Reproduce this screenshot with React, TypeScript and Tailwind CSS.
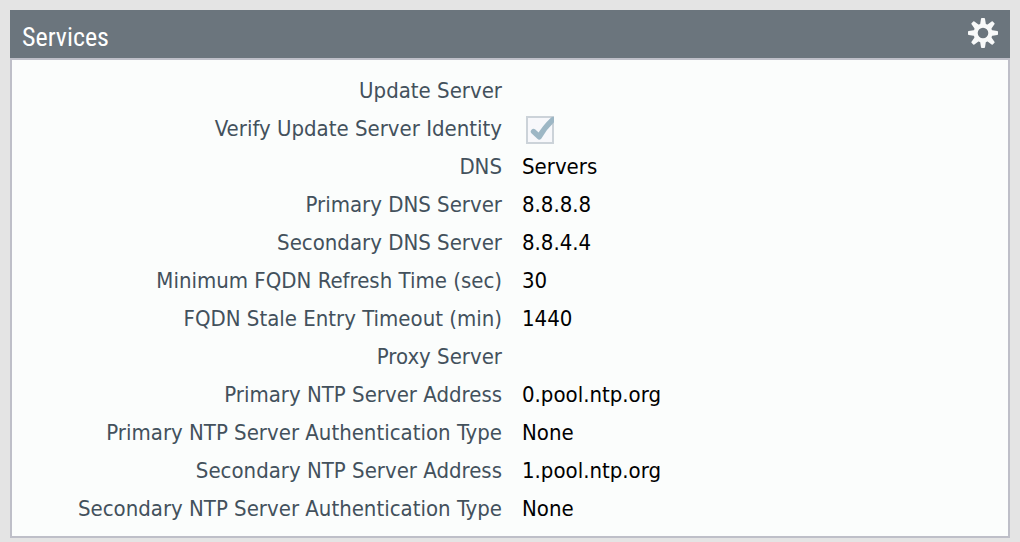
type Row = { label: string; value?: string; checked?: boolean };

const rows: Row[] = [
  { label: "Update Server" },
  { label: "Verify Update Server Identity", checked: true },
  { label: "DNS", value: "Servers" },
  { label: "Primary DNS Server", value: "8.8.8.8" },
  { label: "Secondary DNS Server", value: "8.8.4.4" },
  { label: "Minimum FQDN Refresh Time (sec)", value: "30" },
  { label: "FQDN Stale Entry Timeout (min)", value: "1440" },
  { label: "Proxy Server" },
  { label: "Primary NTP Server Address", value: "0.pool.ntp.org" },
  { label: "Primary NTP Server Authentication Type", value: "None" },
  { label: "Secondary NTP Server Address", value: "1.pool.ntp.org" },
  { label: "Secondary NTP Server Authentication Type", value: "None" },
];

const teeth = [0, 45, 90, 135, 180, 225, 270, 315];

function Gear() {
  return (
    <svg viewBox="0 0 30 30" className="size-[30px]" aria-hidden="true">
      <circle cx="15" cy="15" r="7.4" fill="none" stroke="#f8f9f9" strokeWidth="4.2" />
      {teeth.map((angle) => (
        <path
          key={angle}
          d="M12 7 L13 0.8 Q13.1 0 13.8 0 H16.2 Q16.9 0 17 0.8 L18 7 Z"
          fill="#f8f9f9"
          transform={`rotate(${angle} 15 15)`}
        />
      ))}
    </svg>
  );
}

function Tick({ id }: { id: string }) {
  return (
    <span className="relative ml-1 mt-0.5 block size-7">
      <input
        id={id}
        type="checkbox"
        checked
        disabled
        className="block size-7 appearance-none border-2 border-[#ccd3d9] bg-[#f7f8fb]"
      />
      <svg viewBox="0 0 28 28" className="pointer-events-none absolute inset-0 size-7" aria-hidden="true">
        <path
          d="M7.5 15.5 L13.2 20.8 Q18.5 11.5 27 3.5"
          fill="none"
          stroke="#9db7c5"
          strokeWidth="5.4"
          strokeLinecap="round"
          strokeLinejoin="round"
        />
      </svg>
    </span>
  );
}

export default function App() {
  return (
    <main className="min-h-screen bg-[#e4e4e4] px-2.5 pt-2.5 pb-1">
      <section>
        <header className="flex h-12 items-center justify-between bg-[#6b757d] px-3 pb-0.5">
          <h1 className="pt-2 font-['Roboto_Condensed','DejaVu_Sans_Condensed',sans-serif] text-[26px] leading-9 text-white">
            Services
          </h1>
          <button type="button" aria-label="Edit services" className="block">
            <Gear />
          </button>
        </header>
        <dl className="border-2 border-[#bebfc8] bg-[#fbfdfc] pt-3 pb-2 pl-1 font-['DejaVu_Sans_Condensed','Noto_Sans',sans-serif] text-[22px] leading-[38px]">
          {rows.map(({ label, value, checked }) => (
            <div key={label} className="grid h-[38px] grid-cols-2 gap-5">
              <dt className="whitespace-nowrap text-right text-[#43515c]">
                {checked ? <label htmlFor="verify-identity">{label}</label> : label}
              </dt>
              <dd className="flex items-center text-black">{checked ? <Tick id="verify-identity" /> : value}</dd>
            </div>
          ))}
        </dl>
      </section>
    </main>
  );
}
